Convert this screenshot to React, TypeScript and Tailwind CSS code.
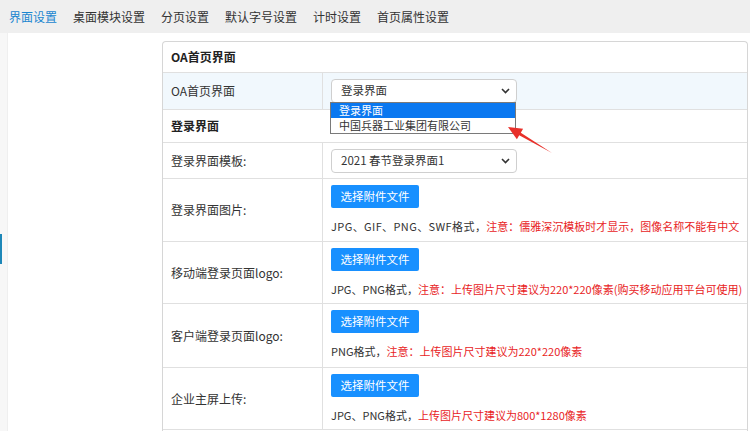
import { ReactNode } from "react";

const tabs = ["界面设置", "桌面模块设置", "分页设置", "默认字号设置", "计时设置", "首页属性设置"];

const font = { fontFamily: '"Noto Sans CJK SC", "Noto Sans", sans-serif' };

const Chevron = () => (
  <svg width="9" height="6" viewBox="0 0 9 6" className="text-[#333]">
    <path d="M1 1l3.5 3.5L8 1" fill="none" stroke="currentColor" strokeWidth="1.6" />
  </svg>
);

const FakeSelect = ({ value }: { value: string }) => (
  <div className="flex h-[24px] w-[186px] items-center justify-between rounded-[4px] border border-[#cfcfcf] bg-white pr-[6px] pl-[9px] text-[11.5px] text-[#333]">
    <span>{value}</span>
    <Chevron />
  </div>
);

const UploadButton = () => (
  <div className="flex h-[23px] w-[88px] items-center justify-center rounded-[2px] bg-[#1890ff] text-[11.5px] text-white">
    选择附件文件
  </div>
);

type RowProps = {
  label: string;
  height: string;
  children: ReactNode;
  highlight?: boolean;
  top?: boolean;
};

const Row = ({ label, height, children, highlight, top }: RowProps) => (
  <div
    className={`grid grid-cols-[160px_minmax(0,1fr)] border-t border-[#e0e0e0] ${height} ${highlight ? "bg-[#f1f8fd]" : ""}`}
  >
    <div className="flex items-center border-r border-[#e0e0e0] pl-[8px] text-[12px] text-[#333]">{label}</div>
    <div className={`flex min-w-0 flex-col overflow-hidden pl-[8px] ${top ? "pt-[6px]" : "justify-center"}`}>
      {children}
    </div>
  </div>
);

const Section = ({ title, height }: { title: string; height: string }) => (
  <div className={`flex items-center border-t border-[#e0e0e0] pl-[8px] text-[12px] font-bold text-[#222] ${height}`}>
    {title}
  </div>
);

const UploadRow = ({ label, height, note }: { label: string; height: string; note: ReactNode }) => (
  <Row label={label} height={height} top>
    <UploadButton />
    <div className="mt-[9px] text-[11px] leading-[18px] whitespace-nowrap text-[#333]">{note}</div>
  </Row>
);

export default function App() {
  return (
    <div className="h-[431px] w-[750px] overflow-hidden bg-white" style={font}>
      <div className="flex h-[33px] items-center gap-[16px] bg-[#efefef] pl-[9px] text-[12px] text-[#333]">
        {tabs.map((t, i) => (
          <span key={t} className={i === 0 ? "text-[#1a86d0]" : ""}>
            {t}
          </span>
        ))}
      </div>
      <div className="flex">
        <div className="w-[8px] shrink-0 border-r border-[#efefef] bg-[#f7f7f7] pt-[201px]">
          <div className="h-[30px] w-[2px] bg-[#1d87b8]" />
        </div>
        <div className="relative min-w-0 flex-1 pt-[8px] pr-[2px] pl-[154px]">
          <div className="rounded-t-[4px] border border-b-0 border-[#d6d6d6]">
            <div className="flex h-[30px] items-center pl-[8px] text-[12px] font-bold text-[#222]">OA首页界面</div>
            <Row label="OA首页界面" height="h-[37px]" highlight>
              <FakeSelect value="登录界面" />
            </Row>
            <Section title="登录界面" height="h-[33px]" />
            <Row label="登录界面模板:" height="h-[36px]">
              <FakeSelect value="2021 春节登录界面1" />
            </Row>
            <UploadRow
              label="登录界面图片:"
              height="h-[63px]"
              note={
                <>
                  <span className="tracking-[0.4px]">JPG、GIF、PNG、SWF格式，</span>
                  <span className="text-[#e8231e]">注意：儒雅深沉模板时才显示，图像名称不能有中文</span>
                </>
              }
            />
            <UploadRow
              label="移动端登录页面logo:"
              height="h-[62px]"
              note={
                <>
                  JPG、PNG格式，<span className="text-[#e8231e]">注意：上传图片尺寸建议为220*220像素(购买移动应用平台可使用)</span>
                </>
              }
            />
            <UploadRow
              label="客户端登录页面logo:"
              height="h-[64px]"
              note={
                <>
                  PNG格式，<span className="text-[#e8231e]">注意：上传图片尺寸建议为220*220像素</span>
                </>
              }
            />
            <UploadRow
              label="企业主屏上传:"
              height="h-[62px]"
              note={
                <>
                  JPG、PNG格式，<span className="text-[#e8231e]">上传图片尺寸建议为800*1280像素</span>
                </>
              }
            />
            <div className="h-[10px] border-t border-[#e0e0e0]" />
          </div>

          {/* open dropdown of the first select */}
          <div className="absolute top-[69px] left-[322px] w-[186px] border border-[#7a7a7a] bg-white text-[11px]">
            <div className="h-[15px] bg-[#0a78f0] pl-[8px] leading-[15px] text-white">登录界面</div>
            <div className="h-[15px] pl-[8px] leading-[15px] text-[#333]">中国兵器工业集团有限公司</div>
          </div>

          {/* red annotation arrow */}
          <svg className="absolute top-[87px] left-[492px]" width="60" height="40" viewBox="0 0 60 40">
            <polygon points="8,7 23.1,8.8 20.8,12.7 52,33 19.2,15.3 16.9,19.2" fill="#e8302a" />
          </svg>
        </div>
      </div>
    </div>
  );
}
